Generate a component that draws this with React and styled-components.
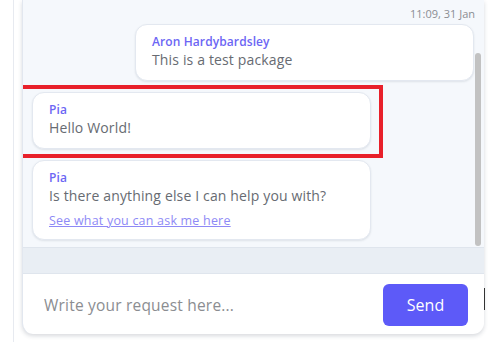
import React from "react";
import styled, { createGlobalStyle } from "styled-components";

const GlobalStyle = createGlobalStyle`
  html, body {
    margin: 0;
    padding: 0;
    background: #ffffff;
    font-family: "Open Sans", "Noto Sans", sans-serif;
  }
  * {
    box-sizing: border-box;
  }
`;

const Page = styled.div`
  display: flex;
  height: 342px;
  width: 489px;
  overflow: hidden;
`;

const LeftGutter = styled.div`
  width: 13px;
  flex-shrink: 0;
`;

const Column = styled.div`
  display: flex;
  flex: 1;
  border-left: 1px solid #e7eaf0;
  padding-left: 8px;
  height: 342px;
`;

const Panel = styled.div`
  display: flex;
  flex-direction: column;
  width: 462px;
  height: 334px;
  border-left: 1px solid #e2e7ef;
  border-radius: 0 0 11px 11px;
  box-shadow: 0 2px 4px rgba(40, 50, 70, 0.18);
  overflow: hidden;
  background: #ffffff;
`;

const Messages = styled.div`
  display: flex;
  height: 248px;
  background: #f5f8fc;
  border-bottom: 1px solid #dfe5ed;
`;

const Thread = styled.div`
  flex: 1;
  display: flex;
  flex-direction: column;
  gap: 11px;
  padding: 5px 0 0 9px;
`;

const Stamp = styled.div`
  align-self: flex-end;
  font-size: 11px;
  line-height: 17px;
  color: #8a8d93;
  margin-bottom: -10px;
  margin-right: -1px;
`;

const BubbleWrap = styled.div`
  position: relative;
  align-self: ${(p) => (p.$mine ? "flex-end" : "flex-start")};
  width: 339px;
  margin-top: ${(p) => (p.$mine ? "1px" : "0")};
`;

const Bubble = styled.div`
  background: #ffffff;
  border: 1px solid #e3e8f0;
  border-radius: 12px;
  box-shadow: 0 1px 2px rgba(60, 70, 90, 0.12);
  padding: 9px 16px 10px 16px;
`;

const Author = styled.div`
  font-size: 12px;
  line-height: 16px;
  font-weight: 600;
  color: #6c66f4;
  letter-spacing: 0.1px;
`;

const Text = styled.div`
  font-size: 14px;
  line-height: 20px;
  color: #676b72;
  letter-spacing: 0.15px;
`;

const HelpLink = styled.a`
  display: block;
  margin-top: 7px;
  font-size: 12.5px;
  line-height: 16px;
  color: #8e89f6;
  letter-spacing: 0.2px;
  text-decoration: underline;
  cursor: pointer;
`;

const Highlight = styled.div`
  position: absolute;
  top: -7px;
  left: -14px;
  right: -12px;
  bottom: -9px;
  border: 4px solid #e8202a;
  pointer-events: none;
`;

const Track = styled.div`
  width: 10px;
  padding: 53px 3px 1px 1px;
`;

const Thumb = styled.div`
  height: 100%;
  background: #c2c2c2;
  border-radius: 3px;
`;

const Band = styled.div`
  height: 26px;
  background: #e9eef4;
  border-bottom: 1px solid #dfe5ed;
`;

const Composer = styled.div`
  flex: 1;
  display: flex;
  align-items: flex-start;
  justify-content: space-between;
  padding: 10px 16px 0 21px;
`;

const Input = styled.input`
  flex: 1;
  border: none;
  outline: none;
  background: transparent;
  font-family: inherit;
  font-size: 15.5px;
  letter-spacing: 0.2px;
  color: #333;
  height: 42px;
  padding: 0;
  &::placeholder {
    color: #8b8d91;
  }
`;

const SendButton = styled.button`
  width: 85px;
  height: 42px;
  border: none;
  border-radius: 6px;
  background: #5d5af8;
  color: #ffffff;
  font-family: inherit;
  font-size: 16px;
  cursor: pointer;
`;

const RightEdge = styled.div`
  width: 5px;
  padding-top: 288px;
`;

const Caret = styled.div`
  width: 1px;
  height: 22px;
  background: #333;
`;

const messages = [
  { id: 1, mine: true, author: "Aron Hardybardsley", text: "This is a test package" },
  { id: 2, author: "Pia", text: "Hello World!", marked: true },
  {
    id: 3,
    author: "Pia",
    text: "Is there anything else I can help you with?",
    link: "See what you can ask me here",
  },
];

export default function App() {
  return (
    <>
      <GlobalStyle />
      <Page>
        <LeftGutter />
        <Column>
          <Panel>
            <Messages>
              <Thread>
                <Stamp>11:09, 31 Jan</Stamp>
                {messages.map((m) => (
                  <BubbleWrap key={m.id} $mine={m.mine}>
                    {m.marked && <Highlight />}
                    <Bubble>
                      <Author>{m.author}</Author>
                      <Text>{m.text}</Text>
                      {m.link && <HelpLink>{m.link}</HelpLink>}
                    </Bubble>
                  </BubbleWrap>
                ))}
              </Thread>
              <Track>
                <Thumb />
              </Track>
            </Messages>
            <Band />
            <Composer>
              <Input placeholder="Write your request here..." />
              <SendButton>Send</SendButton>
            </Composer>
          </Panel>
          <RightEdge>
            <Caret />
          </RightEdge>
        </Column>
      </Page>
    </>
  );
}
